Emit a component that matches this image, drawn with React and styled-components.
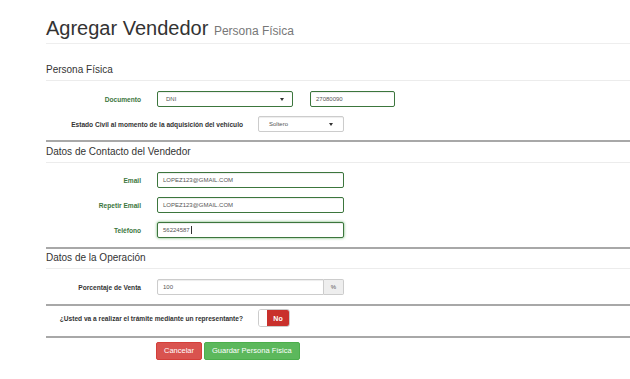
import styled, { createGlobalStyle } from "styled-components";

const GlobalStyle = createGlobalStyle`
  body {
    margin: 0;
    background: #fff;
    font-family: "Liberation Sans", Arial, sans-serif;
  }
`;

const Page = styled.div`
  padding-left: 46px;
  color: #333;
  overflow: hidden;
`;

const Header = styled.div`
  padding: 16px 0 3px;
  border-bottom: 1px solid #eee;
`;

const Title = styled.h1`
  margin: 0;
  font-size: 20px;
  font-weight: 400;
  line-height: 24px;
  color: #333;
`;

const Subtitle = styled.small`
  font-size: 12px;
  line-height: 1;
  color: #777;
`;

const Legend = styled.div`
  margin-top: ${(p) => p.$mt}px;
  font-size: 10px;
  line-height: 14px;
  padding-bottom: 3px;
  border-bottom: 1px solid #ececec;
`;

const Divider = styled.div`
  margin-top: ${(p) => p.$mt}px;
  border-top: 2px solid #a8a8a8;
`;

const Row = styled.div`
  display: flex;
  align-items: center;
  height: ${(p) => p.$h || 16}px;
  margin-top: ${(p) => p.$mt}px;
`;

const Label = styled.label`
  flex: none;
  width: ${(p) => p.$w}px;
  margin-right: ${(p) => p.$gap}px;
  text-align: right;
  font-size: 6.6px;
  font-weight: 700;
  color: ${(p) => (p.$ok ? "#3c763d" : "#333")};
`;

const Field = styled.div`
  flex: none;
  box-sizing: border-box;
  width: ${(p) => p.$w}px;
  height: 16px;
  margin-right: ${(p) => p.$mr || 0}px;
  padding: 0 ${(p) => p.$pad ?? 5}px;
  display: flex;
  align-items: center;
  justify-content: space-between;
  border: 1px solid ${(p) => (p.$ok ? "#3c763d" : "#ccc")};
  border-radius: ${(p) => (p.$group ? "2px 0 0 2px" : "2px")};
  background: #fff;
  box-shadow: ${(p) =>
    p.$focus
      ? "inset 0 1px 1px rgba(0,0,0,.075), 0 0 3px #67b168"
      : "inset 0 1px 1px rgba(0,0,0,.075)"};
  font-size: 6px;
  color: #555;
`;

const Caret = styled.span`
  width: 0;
  height: 0;
  border-left: 2px solid transparent;
  border-right: 2px solid transparent;
  border-top: 3px solid #333;
`;

const TextCursor = styled.span`
  display: inline-block;
  width: 1px;
  height: 8px;
  margin-left: 1px;
  background: #333;
  vertical-align: middle;
`;

const Addon = styled.div`
  flex: none;
  box-sizing: border-box;
  width: 20px;
  height: 16px;
  display: flex;
  align-items: center;
  justify-content: center;
  border: 1px solid #ccc;
  border-left: none;
  border-radius: 0 2px 2px 0;
  background: #eee;
  font-size: 6px;
  color: #555;
`;

const Switch = styled.div`
  display: flex;
  box-sizing: border-box;
  width: 32px;
  height: 18px;
  border: 1px solid #ccc;
  border-radius: 3px;
  overflow: hidden;
`;

const Handle = styled.span`
  width: 8px;
  background: #fff;
`;

const SwitchOff = styled.span`
  flex: 1;
  display: flex;
  align-items: center;
  justify-content: center;
  background: #c9302c;
  color: #fff;
  font-size: 7px;
  font-weight: 700;
`;

const Actions = styled.div`
  display: flex;
  gap: 2px;
  margin: 4px 0 0 110px;
`;

const Button = styled.button`
  height: 18px;
  padding: 0 7px;
  border: 1px solid ${(p) => (p.$danger ? "#d43f3a" : "#4cae4c")};
  border-radius: 2px;
  background: ${(p) => (p.$danger ? "#d9534f" : "#5cb85c")};
  color: #fff;
  font-family: inherit;
  font-size: 7.5px;
  line-height: 16px;
`;

const App = () => {
  return (
    <Page>
      <GlobalStyle />
      <Header>
        <Title>
          Agregar Vendedor <Subtitle>Persona Física</Subtitle>
        </Title>
      </Header>

      <Legend $mt={19}>Persona Física</Legend>
      <Row $mt={10}>
        <Label $w={95} $gap={16} $ok>
          Documento
        </Label>
        <Field $w={136} $mr={17} $pad={8} $ok>
          DNI
          <Caret />
        </Field>
        <Field $w={85} $ok>
          27080090
        </Field>
      </Row>
      <Row $mt={9}>
        <Label $w={197} $gap={15}>
          Estado Civil al momento de la adquisición del vehículo
        </Label>
        <Field $w={86} $pad={10}>
          Soltero
          <Caret />
        </Field>
      </Row>
      <Divider $mt={8} />

      <Legend $mt={3}>Datos de Contacto del Vendedor</Legend>
      <Row $mt={9}>
        <Label $w={95} $gap={16} $ok>
          Email
        </Label>
        <Field $w={187} $ok>
          LOPEZ123@GMAIL.COM
        </Field>
      </Row>
      <Row $mt={9}>
        <Label $w={95} $gap={16} $ok>
          Repetir Email
        </Label>
        <Field $w={187} $ok>
          LOPEZ123@GMAIL.COM
        </Field>
      </Row>
      <Row $mt={9}>
        <Label $w={95} $gap={16} $ok>
          Teléfono
        </Label>
        <Field $w={187} $ok $focus>
          <span>
            56224587
            <TextCursor />
          </span>
        </Field>
      </Row>
      <Divider $mt={9} />

      <Legend $mt={2}>Datos de la Operación</Legend>
      <Row $mt={10}>
        <Label $w={95} $gap={16}>
          Porcentaje de Venta
        </Label>
        <Field $w={167} $group>
          100
        </Field>
        <Addon>%</Addon>
      </Row>
      <Divider $mt={9} />

      <Row $mt={3} $h={18}>
        <Label $w={197} $gap={15}>
          ¿Usted va a realizar el trámite mediante un representante?
        </Label>
        <Switch>
          <Handle />
          <SwitchOff>No</SwitchOff>
        </Switch>
      </Row>
      <Divider $mt={9} />

      <Actions>
        <Button $danger>Cancelar</Button>
        <Button>Guardar Persona Física</Button>
      </Actions>
    </Page>
  );
};

export default App;
